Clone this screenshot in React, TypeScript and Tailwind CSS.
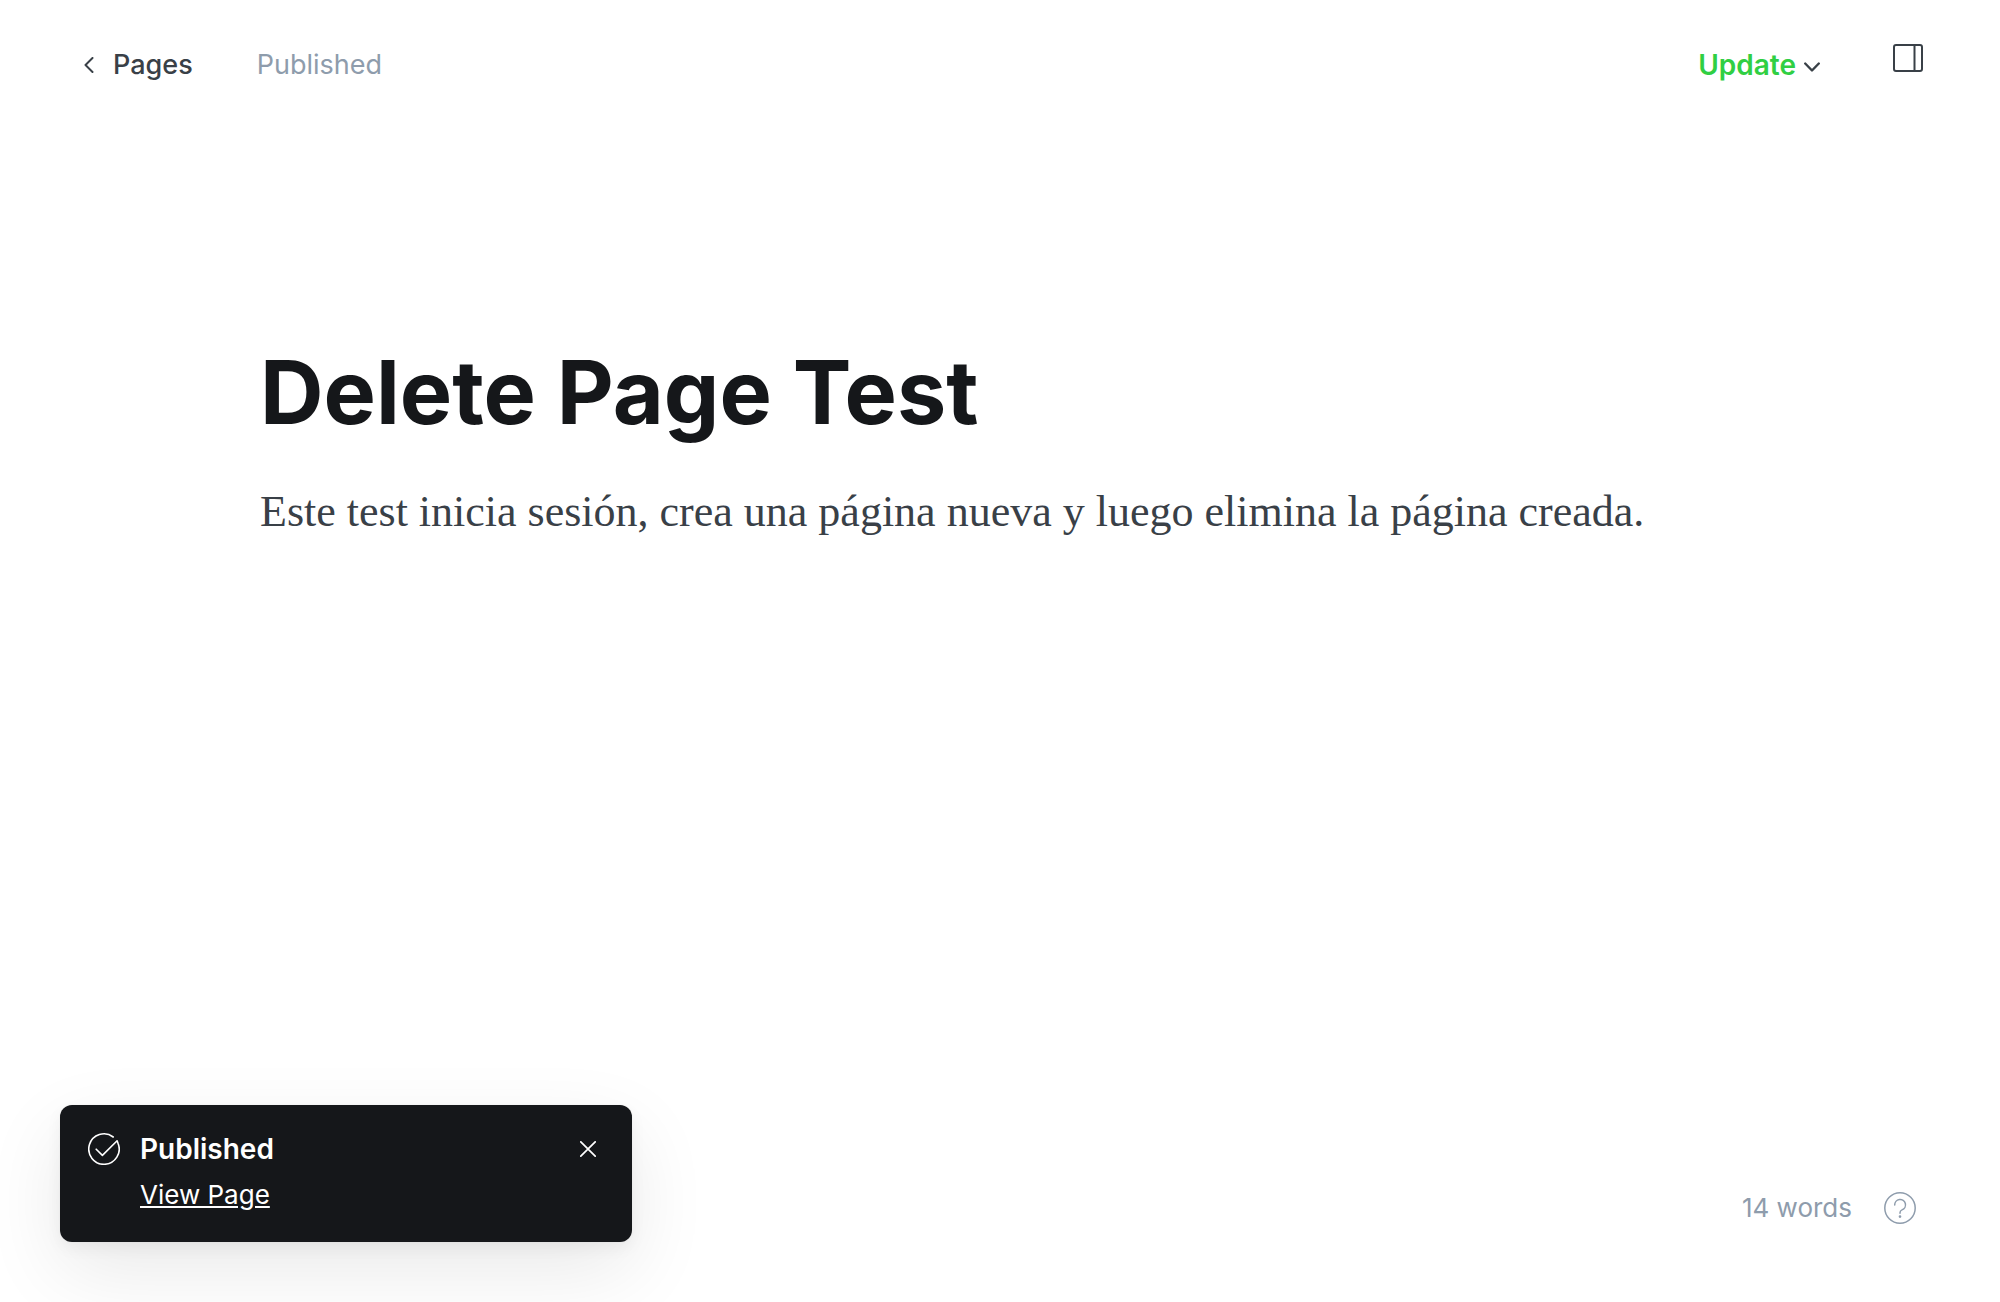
import React from "react";

function ChevronLeft() {
  return (
    <svg className="h-4 w-3" viewBox="0 0 12 16" fill="none" stroke="currentColor" strokeWidth="2" strokeLinecap="round" strokeLinejoin="round" aria-hidden="true">
      <path d="M9.5 1 2.5 8l7 7" />
    </svg>
  );
}

function ChevronDown() {
  return (
    <svg className="mt-1 h-3 w-4" viewBox="0 0 16 12" fill="none" stroke="#394047" strokeWidth="2.4" strokeLinecap="round" strokeLinejoin="round" aria-hidden="true">
      <path d="M1.2 2.5 8 9.5l6.8-7" />
    </svg>
  );
}

function SidebarIcon() {
  return (
    <svg className="h-7 w-[30px]" viewBox="0 0 30 28" fill="none" stroke="currentColor" strokeWidth="2" aria-hidden="true">
      <rect x="1" y="1" width="28" height="26" rx="2" />
      <path d="M21.5 1v26" />
    </svg>
  );
}

function CheckCircle() {
  return (
    <svg className="h-8 w-8" viewBox="0 0 32 32" fill="none" stroke="currentColor" strokeWidth="1.6" strokeLinecap="round" strokeLinejoin="round" aria-hidden="true">
      <path d="M25.2 4A15.2 15.2 0 1 0 30 10.2L29.1 7.7 14.4 22.4 8.2 16.2" />
    </svg>
  );
}

function CloseIcon() {
  return (
    <svg className="h-4 w-4" viewBox="0 0 16 16" fill="none" stroke="currentColor" strokeWidth="1.7" strokeLinecap="round" aria-hidden="true">
      <path d="m.8.8 14.4 14.4M15.2.8.8 15.2" />
    </svg>
  );
}

function HelpIcon() {
  return (
    <svg className="h-8 w-8" viewBox="0 0 32 32" fill="none" stroke="currentColor" strokeWidth="1.5" strokeLinecap="round" strokeLinejoin="round" aria-hidden="true">
      <circle cx="16" cy="16" r="15.2" />
      <path d="M10.7 13a5.4 5.4 0 1 1 7.3 4.9c-1.2.5-2 1.5-2 2.8v.6" />
      <circle cx="16" cy="24.6" r=".6" fill="currentColor" />
    </svg>
  );
}

export default function App() {
  return (
    <div className="flex min-h-screen flex-col bg-white font-['Inter',sans-serif] text-[#394047]">
      <header className="flex items-start justify-between pt-11 pr-[77px] pl-[83px]">
        <div className="flex items-center gap-16">
          <a href="#pages" className="flex items-center gap-[18px] text-[27px] leading-[42px] font-medium">
            <ChevronLeft />
            Pages
          </a>
          <span className="text-[27px] leading-[42px] text-[#8e9cac]">Published</span>
        </div>
        <div className="flex items-start gap-[73px]">
          <button type="button" className="flex items-center gap-2 text-[28px] leading-[42px] font-semibold text-[#30cf43]">
            Update
            <ChevronDown />
          </button>
          <button type="button" aria-label="Settings">
            <SidebarIcon />
          </button>
        </div>
      </header>

      <main className="grow px-[260px] pt-[246px]">
        <h1 className="text-[88px] leading-[120px] font-bold text-[#15171a]">Delete Page Test</h1>
        <p className="mt-7 font-['Liberation_Serif',serif] text-[44px] leading-16">
          Este test inicia sesión, crea una página nueva y luego elimina la página creada.
        </p>
      </main>

      <footer className="flex items-end justify-between pr-[84px] pb-15 pl-15">
        <div role="status" className="flex w-[572px] items-start gap-5 rounded-xl bg-[#15171a] px-7 pt-6 pb-[27px] text-white shadow-[0_0_2px_rgba(0,0,0,0.05),0_6px_16px_rgba(0,0,0,0.05),0_28px_80px_rgba(0,0,0,0.09)]">
          <div className="pt-1">
            <CheckCircle />
          </div>
          <div className="grow">
            <p className="text-[28px] leading-10 font-semibold">Published</p>
            <a href="#view" className="mt-1.5 block w-fit text-[26px] leading-10 underline">View Page</a>
          </div>
          <button type="button" aria-label="Close" className="p-3 pr-2">
            <CloseIcon />
          </button>
        </div>
        <div className="mb-4 flex items-center gap-8 text-[#8e9cac]">
          <span className="text-[26px] leading-9">14 words</span>
          <button type="button" aria-label="Help">
            <HelpIcon />
          </button>
        </div>
      </footer>
    </div>
  );
}
